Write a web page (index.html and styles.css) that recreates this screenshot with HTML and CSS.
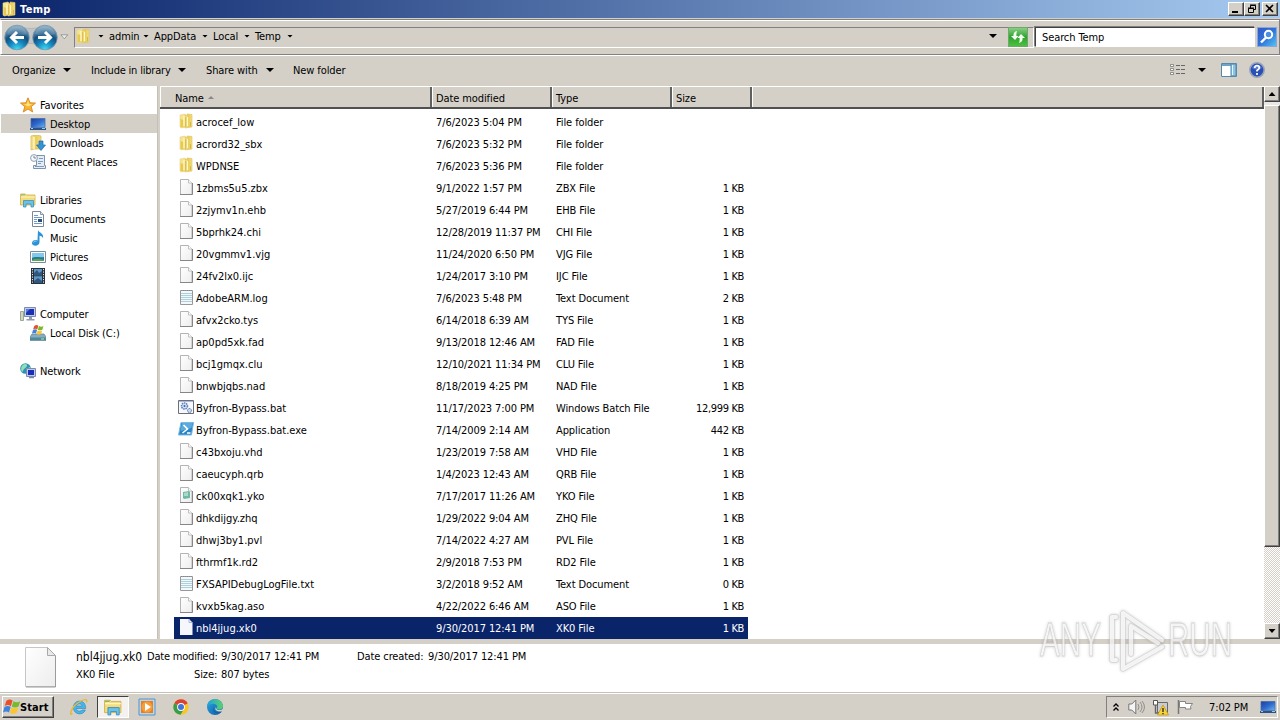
FILE: index.html
```html
<!DOCTYPE html>
<html lang="en">
<head>
<meta charset="utf-8">
<title>Temp</title>
<link rel="stylesheet" href="styles.css">
</head>
<body>
<svg class="defs" aria-hidden="true">
<defs>
<linearGradient id="gFold" x1="0" x2="1"><stop offset="0" stop-color="#f8e795"/><stop offset=".5" stop-color="#e9cd57"/><stop offset="1" stop-color="#f3df86"/></linearGradient>
<linearGradient id="gBlue" x1="0" y1="0" x2="1" y2="1"><stop offset="0" stop-color="#1a3f9a"/><stop offset=".5" stop-color="#2e69cc"/><stop offset="1" stop-color="#6db4ee"/></linearGradient>
<linearGradient id="gPage" x1="0" y1="0" x2="1" y2="1"><stop offset="0" stop-color="#fff"/><stop offset="1" stop-color="#ededed"/></linearGradient>
<radialGradient id="gNav" cx=".5" cy=".98" r=".95"><stop offset="0" stop-color="#3fdcf8"/><stop offset=".35" stop-color="#1586bd"/><stop offset=".62" stop-color="#12507f"/><stop offset="1" stop-color="#8fb2ca"/></radialGradient>
<linearGradient id="gGreen" x1="0" y1="0" x2="0" y2="1"><stop offset="0" stop-color="#8fd08a"/><stop offset=".5" stop-color="#2fa32f"/><stop offset="1" stop-color="#4ec23e"/></linearGradient>
<linearGradient id="gSearch" x1="0" y1="0" x2="1" y2="1"><stop offset="0" stop-color="#3558c4"/><stop offset=".5" stop-color="#2f73da"/><stop offset="1" stop-color="#58c7f5"/></linearGradient>
<linearGradient id="gEdge" x1="0" y1="0" x2="1" y2="1"><stop offset="0" stop-color="#2aa7e0"/><stop offset="1" stop-color="#0c59a4"/></linearGradient>
<linearGradient id="gEdge2" x1="0" x2="1"><stop offset="0" stop-color="#1fa0e0"/><stop offset="1" stop-color="#5bd368"/></linearGradient>
</defs>
<symbol id="folder" viewBox="0 0 16 16"><path d="M2 2l5-1 1 1v12l-5 1-1-1z" fill="#f6e48d" stroke="#e6d28a" stroke-width=".6"/><path d="M7 2.500h2V1l5 .5V14l-7 1z" fill="url(#gFold)" stroke="#dcc05c" stroke-width=".6"/><path d="M2.500 6l3 1v7.500l-3-.5z" fill="#e8c950"/><path d="M6 3v10M9.500 4v9" stroke="#fff8c8" stroke-width="1.200"/><path d="M7.700 4v10M12.500 9v4.500" stroke="#d3b040" stroke-width=".8"/></symbol>
<symbol id="page" viewBox="0 0 16 16"><path d="M2.500.5h8l3.500 3.500v11.500H2.500z" fill="url(#gPage)" stroke="#b4b4b4"/><path d="M14.500 4v11.500H2" fill="none" stroke="#868686"/><path d="M10.500.5V4H14" fill="#fff" stroke="#c0c0c0"/></symbol>
<symbol id="pageSel" viewBox="0 0 16 16"><path d="M2 0h9l3.500 3.500V16H2z" fill="#f5f7fc"/><path d="M11 0v3.500h3" fill="none" stroke="#aab7d8"/></symbol>
<symbol id="text" viewBox="0 0 16 16"><path d="M2.500 1.500h12v14h-12z" fill="#f3f9fb" stroke="#989898"/><path d="M3 4.500h11M3 6.500h11M3 8.500h11M3 10.500h11M3 12.500h11" stroke="#b0cfdc"/><path d="M3 1.500h11" stroke="#888" stroke-dasharray="1 1"/></symbol>
<symbol id="yko" viewBox="0 0 16 16"><use href="#page"/><path d="M5 5l6-1 1 1v6l-6 1-1-1z" fill="#6fb9a6"/><path d="M6 6l4-1v4H6z" fill="#a9dac8"/></symbol>
<symbol id="bat" viewBox="0 0 16 16"><path d="M.5 1.500h15v13H.5z" fill="#f5f8fc" stroke="#6c6f78"/><path d="M1 2.500h14" stroke="#aab9d5"/><circle cx="6.500" cy="7" r="3" fill="#d6e2f5" stroke="#5c7fc0" stroke-width="1.500" stroke-dasharray="1.500 .7"/><circle cx="6.500" cy="7" r="1" fill="#3c5f9c"/><circle cx="11.500" cy="11.500" r="2" fill="#cbd9ef" stroke="#3c5f9c" stroke-dasharray="1 .6"/></symbol>
<symbol id="ps" viewBox="0 0 16 16"><path d="M3 1.500h12.500l-2 12.500H.5z" fill="#2b84c6" stroke="#78b9e3"/><path d="M4 2h10.500l-1 5-11 3z" fill="#5cabdf"/><path d="M5.500 4l4 4-5 4M9 12h3.500" fill="none" stroke="#fff" stroke-width="1.600"/></symbol>
<symbol id="star" viewBox="0 0 16 16"><path d="M8 .8l2 5 5.500.3-4.300 3.500 1.500 5.400L8 12l-4.700 3 1.500-5.400L.5 6.100 6 5.800z" fill="#f9b532" stroke="#dc8320" stroke-width=".9"/><path d="M8 3l1.200 4 3 .3L8 9.500 4 7.200l3-.2z" fill="#ffe77c"/></symbol>
<symbol id="desk" viewBox="0 0 16 16"><path d="M1 2.500h14v9H1z" fill="url(#gBlue)" stroke="#456ba9" stroke-width=".8"/><path d="M0 12h16v2H0z" fill="#2d5086"/><path d="M1 12.500h2M12 12.500h3" stroke="#8fd2e8"/></symbol>
<symbol id="down" viewBox="0 0 16 16"><path d="M1 1l5-1 5 1v13H4l-3 1z" fill="url(#gFold)" stroke="#d5b34c" stroke-width=".7"/><path d="M4 2v12" stroke="#fffbd9" stroke-width="1.300"/><path d="M9 6h4v4h2.500L11 15.500 6.500 10H9z" fill="#3493d3" stroke="#1d6ba9" stroke-width=".7"/></symbol>
<symbol id="recent" viewBox="0 0 16 16"><path d="M6.500 1.500h8v10h1v3h-12v-3h3z" fill="#e4edf6" stroke="#7d93a9"/><path d="M9 4.500h4M8 7.500h5M8 9.500h3M5 12.500h9" stroke="#7c9dbe"/><circle cx="4" cy="4" r="3.400" fill="#f6f9fc" stroke="#8e9fae"/><path d="M4 2v2h2" fill="none" stroke="#5a6d85" stroke-width=".8"/></symbol>
<symbol id="lib" viewBox="0 0 16 16"><path d="M.5 3.500V2h5l1 1h8.500v10H.5z" fill="#f4dc7c" stroke="#ceaf4d" stroke-width=".8"/><path d="M1 5h14M2 3.500h3" stroke="#fff6bd"/><path d="M1 3h4" stroke="#74b66e"/><path d="M3.500 15V8.500h10V15h-2.500v-3H6v3z" fill="#6cc2e4" stroke="#3b90bf" stroke-width=".8"/></symbol>
<symbol id="doc" viewBox="0 0 16 16"><path d="M2.500.5h8l3 3v12h-11z" fill="#fff" stroke="#7d8793"/><path d="M10.500.5v3h3" fill="#dce6f0" stroke="#8a97a6"/><path d="M4 4.500h4M4 6.500h8M4 8.500h3M4 10.500h3M4 12.500h8" stroke="#6c9cc9"/><path d="M8 8h4v3H8z" fill="#294f80"/></symbol>
<symbol id="music" viewBox="0 0 16 16"><path d="M8 0c1 3 6 3 5 8-1-2-2-2-3.500-2.300V12c0 5-8 4.500-7.500 1 .2-2.500 3-3.500 5.500-2.500z" fill="#2c93d5"/><path d="M3.500 12.500c.5-1.300 2-1.700 3-1.300" stroke="#9bd7f5" fill="none"/></symbol>
<symbol id="pic" viewBox="0 0 16 16"><path d="M.5 2.500h15v11H.5z" fill="#fff" stroke="#7d8c9b"/><path d="M2 4h12v8H2z" fill="#83c9ee"/><path d="M2 9c4-2 7 0 12-1v4H2z" fill="#267891"/><path d="M2 11c5-2 7-1 12 0v1H2z" fill="#5aa65d"/></symbol>
<symbol id="vid" viewBox="0 0 16 16"><path d="M1 0h14v16H1z" fill="#28313e"/><path d="M4 1h8v6.300H4zM4 8.300h8V15H4z" fill="#5d99c6"/><path d="M4 5l3-3 2 3 3-2v4.300H4zM4 13l4-3 4 3v2H4z" fill="#30587f"/><path d="M2.500 1v15M13.500 1v15" stroke="#e6e9ec" stroke-dasharray="1.200 1.300"/></symbol>
<symbol id="comp" viewBox="0 0 16 16"><path d="M.5 5.500h3v9h-3z" fill="#cdd6bf" stroke="#899583" stroke-width=".8"/><path d="M4.500 1.500h11v9h-11z" fill="#c5cde6" stroke="#7d8aac"/><path d="M6 3h8v6H6z" fill="#1b31b5"/><path d="M6 3h4l-4 4z" fill="#547be3"/><path d="M9 11h3v2H9zM6.500 13h8v1.500h-8z" fill="#8f9bb0"/></symbol>
<symbol id="flag" viewBox="0 0 16 16"><path d="M3 2.500c2-1.500 4-1.500 5.500-.2L7 7.300C5.500 6 3.500 6 1.500 7z" fill="#e8502b"/><path d="M9.300 2.800c2 1.200 4 1.200 6 0l-1.500 4.700c-2 1.200-4 1.200-6 0z" fill="#79b92f"/><path d="M1.300 8c2-1.200 4-1.200 5.500 0l-1.500 4.800c-1.500-1.200-3.500-1.200-5.300 0z" fill="#3f83dd"/><path d="M7.600 8.500c2 1.200 4 1.200 6 0l-1.500 4.700c-2 1.200-4 1.200-6 0z" fill="#fbc52c"/></symbol>
<symbol id="disk" viewBox="0 0 16 16"><path d="M2 9h12l2 3v3.500H0V12z" fill="#8cacbe" stroke="#5d7f90" stroke-width=".7"/><path d="M0 12.500h16V15H0z" fill="#4c8b9d"/><path d="M11 14h3" stroke="#a4ecad"/><use href="#flag" x="2" y="-1" width="12" height="12"/></symbol>
<symbol id="net" viewBox="0 0 16 16"><circle cx="5.500" cy="5.500" r="5.300" fill="#2f8fb4"/><path d="M2 3c2-3 6-2 5 0S4 5 3 8 0 5 2 3zM6 6l4-2v4l-3 2z" fill="#8cdfb8"/><path d="M6.500 5.500h9v8h-9z" fill="#bccae8" stroke="#7d8bb0"/><path d="M8 7h6v5H8z" fill="#1830b7"/><path d="M9 14.500h5" stroke="#7c8aa9" stroke-width="1.500"/></symbol>
<symbol id="ie" viewBox="0 0 18 18"><path d="M15.700 10.500H6.300c.5 3 4.500 3.500 5.700 1.500h3.400c-2.200 6-12 5-12-2.500 0-8.500 12.600-9 12.300 1zM6.400 8h5.900c-.5-2.800-5.300-2.800-5.900 0z" fill="#48b5e7" stroke="#2685c5" stroke-width=".6"/><path d="M2.500 15.500C-1 19 .5 10 7 5.500S18 0 16.500 4.500" fill="none" stroke="#e5b83c" stroke-width="1.400"/></symbol>
<symbol id="wmp" viewBox="0 0 18 18"><path d="M1 1h16v16H1z" fill="#b2d7f2" stroke="#5395c8"/><path d="M3 3h12v12H3z" fill="#ef7d17"/><circle cx="9" cy="9" r="5.500" fill="#f99b36"/><path d="M7 5l6 4-6 4z" fill="#fff"/></symbol>
<symbol id="chrome" viewBox="0 0 18 18"><circle cx="9" cy="9" r="7.700" fill="#f8c727"/><path d="M9 9L2.300 5.200A7.700 7.700 0 0 1 15.700 5.200z" fill="#dc4135"/><path d="M9 9L2.300 5.200A7.700 7.700 0 0 0 8.500 16.700L12 11z" fill="#3b9d4a"/><circle cx="9" cy="9" r="3.900" fill="#fff"/><circle cx="9" cy="9" r="3" fill="#4474d7"/></symbol>
<symbol id="edge" viewBox="0 0 18 18"><circle cx="9" cy="9" r="8" fill="url(#gEdge)"/><path d="M1.200 8C2-1 16-1 17 8c0 4-5 4.500-6.500 2.500C13 7 8 3 1.200 8z" fill="url(#gEdge2)"/><path d="M8 8c-2 4 2 8 8 5l-1 1.500C9 18 5 12 8 8z" fill="#1463a8"/><path d="M10.300 10.500c1 2 5 2 6.500 0l.7 2-2 1C11 14 8 12 10 9z" fill="#d4d0c8"/></symbol>
</svg>

<div class="window">
  <header class="titlebar">
    <svg class="i16"><use href="#folder"/></svg><b class="title">Temp</b>
    <div class="winbtns">
      <span class="wb"><svg width="14" height="12"><path d="M3 9h6" stroke="#000" stroke-width="2"/></svg></span>
      <span class="wb"><svg width="14" height="12"><path d="M5.500 5V2.500h5v4H9M5 2h6M3.500 5.500h5v4h-5zM3 5h6" fill="none" stroke="#000"/></svg></span>
      <span class="wb last"><svg width="14" height="12"><path d="M3 2l7 7M10 2L3 9" stroke="#000" stroke-width="1.600"/></svg></span>
    </div>
  </header>

  <div class="addressbar">
    <svg class="nav" viewBox="0 0 62 27"><path d="M13 2q14 5 28 0v20q-14-5-28 0z" fill="#c2c5c6" stroke="#a5a9ab" stroke-width=".6"/><circle cx="13" cy="13.500" r="12.300" fill="url(#gNav)" stroke="#7b97ab" stroke-width=".8"/><circle cx="41" cy="13.500" r="12.300" fill="url(#gNav)" stroke="#7b97ab" stroke-width=".8"/><path d="M3 10a10.500 10.500 0 0 1 20 0Q13 14 3 10zM31 10a10.500 10.500 0 0 1 20 0Q41 14 31 10z" fill="#fff" opacity=".15"/><path d="M20 13.500H8M13 8l-5.500 5.500L13 19M34 13.500h12M41 8l5.500 5.500L41 19" fill="none" stroke="#fff" stroke-width="3"/></svg>
    <svg class="recentarrow" viewBox="0 0 9 6"><path d="M.8.8h7L4.300 4.800z" fill="#eee" stroke="#888" stroke-width=".8"/></svg>
    <div class="path">
      <svg class="i16"><use href="#folder"/></svg>
      <i class="arr a0"></i><span class="c1">admin</span><i class="arr"></i><span class="c2">AppData</span><i class="arr"></i><span class="c3">Local</span><i class="arr"></i><span class="c4">Temp</span><i class="arr"></i>
      <i class="arr big drop"></i>
    </div>
    <svg class="refresh" viewBox="0 0 20 20"><rect x=".5" y=".5" width="19" height="19" fill="url(#gGreen)" stroke="#6fa86b"/><path d="M9 4Q5 5 5.500 9H3l4 4 3.500-4H8.500Q8 7 9 4zM11 16q4-1 3.500-5H17l-4-4-3.500 4h2q.5 2-.5 5z" fill="#f4fff2"/></svg>
    <div class="search"><span>Search Temp</span></div>
    <svg class="searchbtn" viewBox="0 0 20 20"><rect x=".5" y=".5" width="19" height="19" fill="url(#gSearch)" stroke="#8ba6d8"/><circle cx="11.500" cy="7.500" r="3.700" fill="#4c8de5" stroke="#fff" stroke-width="2"/><path d="M9 10.500l-5 5" stroke="#fff" stroke-width="2.400"/></svg>
  </div>

  <div class="commands">
    <span class="m1">Organize</span><i class="arr big"></i>
    <span class="m2">Include in library</span><i class="arr big"></i>
    <span class="m3">Share with</span><i class="arr big"></i>
    <span class="m4">New folder</span>
    <div class="tools">
      <svg width="16" height="12" viewBox="0 0 16 12"><path d="M.5.5h3v2h-3zM.5 4.500h3v2h-3zM.5 8.500h3v2h-3z" fill="#fff" stroke="#777" stroke-width=".8"/><path d="M6 1.500h9M6 5.500h9M6 9.500h9" stroke="#666" stroke-dasharray="4 1"/></svg>
      <i class="arr big t1"></i>
      <svg class="t2" width="16" height="14" viewBox="0 0 16 14"><path d="M.5.500h15v13H.5z" fill="#fff" stroke="#5588ad"/><path d="M1 2h9" stroke="#6da4c7" stroke-width="2"/><path d="M10 1h5v12h-5z" fill="#8bc5e5" stroke="#5588ad"/><path d="M11.500 2v10" stroke="#e2f5ff"/></svg>
      <svg class="t3" width="16" height="16" viewBox="0 0 16 16"><circle cx="8" cy="8" r="7.200" fill="#2b50b5" stroke="#9aa5ba" stroke-width="1.600"/><path d="M3 6a5.500 5 0 0 1 10 0q-5 3-10 0z" fill="#7296dc" opacity=".7"/><path d="M5.700 6q0-2.300 2.300-2.300T10.300 6Q10.300 7 8 8.500v1M8 11v2" fill="none" stroke="#fff" stroke-width="1.700"/></svg>
    </div>
  </div>

  <main class="content">
    <nav class="tree">
      <div class="node"><svg class="i16"><use href="#star"/></svg><span>Favorites</span></div>
      <div class="node sub on"><svg class="i16"><use href="#desk"/></svg><span>Desktop</span></div>
      <div class="node sub"><svg class="i16"><use href="#down"/></svg><span>Downloads</span></div>
      <div class="node sub"><svg class="i16"><use href="#recent"/></svg><span>Recent Places</span></div>
      <div class="node gap"><svg class="i16"><use href="#lib"/></svg><span>Libraries</span></div>
      <div class="node sub"><svg class="i16"><use href="#doc"/></svg><span>Documents</span></div>
      <div class="node sub"><svg class="i16"><use href="#music"/></svg><span>Music</span></div>
      <div class="node sub"><svg class="i16"><use href="#pic"/></svg><span>Pictures</span></div>
      <div class="node sub"><svg class="i16"><use href="#vid"/></svg><span>Videos</span></div>
      <div class="node gap"><svg class="i16"><use href="#comp"/></svg><span>Computer</span></div>
      <div class="node sub"><svg class="i16"><use href="#disk"/></svg><span>Local Disk (C:)</span></div>
      <div class="node gap"><svg class="i16"><use href="#net"/></svg><span>Network</span></div>
    </nav>
    <section class="files">
      <div class="head"><span class="h1">Name<i class="sort"></i></span><span class="h2">Date modified</span><span class="h3">Type</span><span class="h4">Size</span><span class="h5"></span></div>
      <div class="rows">
        <div class="row"><svg class="i16"><use href="#folder"/></svg><span>acrocef_low</span><span>7/6/2023 5:04 PM</span><span>File folder</span><span></span></div>
        <div class="row"><svg class="i16"><use href="#folder"/></svg><span>acrord32_sbx</span><span>7/6/2023 5:32 PM</span><span>File folder</span><span></span></div>
        <div class="row"><svg class="i16"><use href="#folder"/></svg><span>WPDNSE</span><span>7/6/2023 5:36 PM</span><span>File folder</span><span></span></div>
        <div class="row"><svg class="i16"><use href="#page"/></svg><span>1zbms5u5.zbx</span><span>9/1/2022 1:57 PM</span><span>ZBX File</span><span>1 KB</span></div>
        <div class="row"><svg class="i16"><use href="#page"/></svg><span>2zjymv1n.ehb</span><span>5/27/2019 6:44 PM</span><span>EHB File</span><span>1 KB</span></div>
        <div class="row"><svg class="i16"><use href="#page"/></svg><span>5bprhk24.chi</span><span>12/28/2019 11:37 PM</span><span>CHI File</span><span>1 KB</span></div>
        <div class="row"><svg class="i16"><use href="#page"/></svg><span>20vgmmv1.vjg</span><span>11/24/2020 6:50 PM</span><span>VJG File</span><span>1 KB</span></div>
        <div class="row"><svg class="i16"><use href="#page"/></svg><span>24fv2lx0.ijc</span><span>1/24/2017 3:10 PM</span><span>IJC File</span><span>1 KB</span></div>
        <div class="row"><svg class="i16"><use href="#text"/></svg><span>AdobeARM.log</span><span>7/6/2023 5:48 PM</span><span>Text Document</span><span>2 KB</span></div>
        <div class="row"><svg class="i16"><use href="#page"/></svg><span>afvx2cko.tys</span><span>6/14/2018 6:39 AM</span><span>TYS File</span><span>1 KB</span></div>
        <div class="row"><svg class="i16"><use href="#page"/></svg><span>ap0pd5xk.fad</span><span>9/13/2018 12:46 AM</span><span>FAD File</span><span>1 KB</span></div>
        <div class="row"><svg class="i16"><use href="#page"/></svg><span>bcj1gmqx.clu</span><span>12/10/2021 11:34 PM</span><span>CLU File</span><span>1 KB</span></div>
        <div class="row"><svg class="i16"><use href="#page"/></svg><span>bnwbjqbs.nad</span><span>8/18/2019 4:25 PM</span><span>NAD File</span><span>1 KB</span></div>
        <div class="row"><svg class="i16"><use href="#bat"/></svg><span>Byfron-Bypass.bat</span><span>11/17/2023 7:00 PM</span><span>Windows Batch File</span><span>12,999 KB</span></div>
        <div class="row"><svg class="i16"><use href="#ps"/></svg><span>Byfron-Bypass.bat.exe</span><span>7/14/2009 2:14 AM</span><span>Application</span><span>442 KB</span></div>
        <div class="row"><svg class="i16"><use href="#page"/></svg><span>c43bxoju.vhd</span><span>1/23/2019 7:58 AM</span><span>VHD File</span><span>1 KB</span></div>
        <div class="row"><svg class="i16"><use href="#page"/></svg><span>caeucyph.qrb</span><span>1/4/2023 12:43 AM</span><span>QRB File</span><span>1 KB</span></div>
        <div class="row"><svg class="i16"><use href="#yko"/></svg><span>ck00xqk1.yko</span><span>7/17/2017 11:26 AM</span><span>YKO File</span><span>1 KB</span></div>
        <div class="row"><svg class="i16"><use href="#page"/></svg><span>dhkdijgy.zhq</span><span>1/29/2022 9:04 AM</span><span>ZHQ File</span><span>1 KB</span></div>
        <div class="row"><svg class="i16"><use href="#page"/></svg><span>dhwj3by1.pvl</span><span>7/14/2022 4:27 AM</span><span>PVL File</span><span>1 KB</span></div>
        <div class="row"><svg class="i16"><use href="#page"/></svg><span>fthrmf1k.rd2</span><span>2/9/2018 7:53 PM</span><span>RD2 File</span><span>1 KB</span></div>
        <div class="row"><svg class="i16"><use href="#text"/></svg><span>FXSAPIDebugLogFile.txt</span><span>3/2/2018 9:52 AM</span><span>Text Document</span><span>0 KB</span></div>
        <div class="row"><svg class="i16"><use href="#page"/></svg><span>kvxb5kag.aso</span><span>4/22/2022 6:46 AM</span><span>ASO File</span><span>1 KB</span></div>
        <div class="row selected"><svg class="i16"><use href="#pageSel"/></svg><span>nbl4jjug.xk0</span><span>9/30/2017 12:41 PM</span><span>XK0 File</span><span>1 KB</span></div>
      </div>
    </section>
    <div class="scroll"><span class="sb"><i class="up"></i></span><span class="thumb"></span><span class="track"></span><span class="sb"><i class="arr"></i></span></div>
  </main>

  <section class="details">
    <svg class="bigpage" viewBox="0 0 32 42"><path d="M.5 1.500h22l8 8v31H.5z" fill="url(#gPage)" stroke="#c6c6c6"/><path d="M30.500 10v31H1" fill="none" stroke="#9b9b9b"/><path d="M22.500 1.500v8h8z" fill="#e9e9e9" stroke="#a9a9a9"/></svg>
    <div class="info">
      <div class="line"><span class="fname">nbl4jjug.xk0</span><span class="dl">Date modified:</span><span class="dv">9/30/2017 12:41 PM</span><span class="cl">Date created:</span><span>9/30/2017 12:41 PM</span></div>
      <div class="line"><span class="ftype">XK0 File</span><span class="sl">Size:</span><span>807 bytes</span></div>
    </div>
  </section>

  <footer class="taskbar">
    <div class="start"><svg width="18" height="18"><use href="#flag"/></svg><b>Start</b></div>
    <span class="tb"><svg class="i18"><use href="#ie"/></svg></span>
    <span class="tb active"><svg class="i18"><use href="#lib"/></svg></span>
    <span class="tb"><svg class="i18"><use href="#wmp"/></svg></span>
    <span class="tb"><svg class="i18"><use href="#chrome"/></svg></span>
    <span class="tb"><svg class="i18"><use href="#edge"/></svg></span>
    <div class="tray">
      <svg width="6" height="9" viewBox="0 0 6 9"><path d="M.5 3.500L3 1l2.500 2.500M.5 7.500L3 5l2.500 2.500" fill="none" stroke="#000" stroke-width="1.300"/></svg>
      <svg class="vol" width="17" height="16" viewBox="0 0 17 16"><path d="M.8 5h3l4-4v14l-4-4h-3z" fill="#f4f4f4" stroke="#777"/><path d="M10 5q2 3 0 6M12 3q4 5 0 10M14 2q5 6 0 12" fill="none" stroke="#888" stroke-width=".9"/></svg>
      <svg class="nw" width="17" height="17" viewBox="0 0 17 17"><path d="M5.500 3.500h10v10h-10z" fill="#c9ccd0" stroke="#686868"/><path d="M1.500 1.500h4V6h-4z" fill="#fff" stroke="#555"/><path d="M3.500 6v8h4" fill="none" stroke="#666" stroke-width="1.400"/><path d="M11 6l5.500 10h-11z" fill="#fbd330" stroke="#bb901c" stroke-width=".7"/><path d="M11 9v4M11 14v1.300" stroke="#222" stroke-width="1.300"/></svg>
      <svg class="fl" width="17" height="16" viewBox="0 0 17 16"><path d="M1.500 1v14" stroke="#777" stroke-width="1.500"/><path d="M2.500 2.500h6v2h7l-2 3 .5 2.500H8.500V8.500h-6z" fill="#fff" stroke="#858585"/></svg>
      <span class="clock">7:02 PM</span>
      <svg class="i16 sd"><use href="#desk"/></svg>
    </div>
  </footer>

  <svg class="watermark" viewBox="0 0 220 80"><g fill="#fff" stroke="#ccc" stroke-width=".8" opacity=".72"><text x="6" y="54" textLength="61" lengthAdjust="spacingAndGlyphs">ANY</text><text x="134" y="54" textLength="64" lengthAdjust="spacingAndGlyphs">RUN</text></g><g fill="none" stroke-linejoin="round" stroke-linecap="round" opacity=".72"><path d="M82 15h-4v43h4M128 38L89 11v56l39-22M97 52V24l27 17" stroke="#ccc" stroke-width="5.400"/><path d="M82 15h-4v43h4M128 38L89 11v56l39-22M97 52V24l27 17" stroke="#fff" stroke-width="4"/></g></svg>
</div>
</body>
</html>
```
FILE: styles.css
```css
* { box-sizing: border-box; }
body { margin: 0; overflow: hidden; }
.defs { position: absolute; width: 0; height: 0; }
.window {
  position: relative; width: 1280px; height: 720px; overflow: hidden;
  display: flex; flex-direction: column; background: #d4d0c8; color: #000;
  font: 11px/14px "DejaVu Sans Condensed", "DejaVu Sans", sans-serif;
  font-stretch: condensed; letter-spacing: -0.1px; white-space: nowrap;
}
.i16 { width: 16px; height: 16px; flex: none; }
.i18 { width: 18px; height: 18px; flex: none; }
.title, .node span, .row span, .line span, .start b, .clock { padding-top: 2px; }

.titlebar { height: 18px; flex: none; display: flex; align-items: center; padding: 0 2px 0 1px; background: linear-gradient(90deg, #0a246a, #a6caf0); }
.title { color: #fff; font-size: 11px; margin-left: 3px; letter-spacing: .35px; }
.winbtns { margin-left: auto; display: flex; }
.wb { width: 16px; height: 14px; background: #d4d0c8; border: 1px solid; border-color: #fff #404040 #404040 #fff; box-shadow: inset -1px -1px #808080; }
.wb svg { display: block; }
.wb.last { margin-left: 2px; }

.addressbar { height: 36px; flex: none; display: flex; align-items: center; padding: 0 2px 0 3px; margin-top: 1px; border: 1px solid #808080; border-left-color: #fff; box-shadow: inset 1px 1px #fff; }
.nav { width: 62px; height: 27px; flex: none; margin-right: -6px; }
.recentarrow { width: 9px; height: 6px; flex: none; }
.path { width: 960px; margin-left: 5px; height: 21px; flex: none; display: flex; align-items: center; border: 1px solid; border-color: #808080 #fff #fff #808080; padding-bottom: 2px; }
.path span { padding-top: 2px; }
.arr { width: 5px; height: 3px; background: #000; clip-path: polygon(0 0, 100% 0, 50% 100%); flex: none; }
.path .arr { width: 6px; }
.arr.big, .path .arr.big { width: 8px; height: 4px; }
.path .a0 { margin-left: 7px; }
.path .c1 { margin-left: 5px; width: 34px; }
.path .c2 { margin-left: 5px; width: 48px; }
.path .c3 { margin-left: 5px; width: 30px; }
.path .c4 { margin-left: 5px; width: 32px; }
.path .c3 + .arr { margin-left: 1px; }
.path .drop { margin-left: auto; margin-right: 36px; }
.refresh { width: 20px; height: 20px; flex: none; margin-left: -26px; }
.search { margin-left: 7px; width: 220px; height: 20px; background: #fff; border: 1px solid #404040; border-right-color: #fff; border-bottom-color: #fff; box-shadow: -1px -1px #808080; padding: 3px 0 0 6px; }
.searchbtn { width: 20px; height: 20px; margin-left: 2px; flex: none; }

.commands { height: 31px; flex: none; display: flex; align-items: center; padding: 0 0 2px 12px; border-top: 1px solid #fff; }
.commands > span { padding-top: 2px; }
.m1 { width: 51px; } .m2 { width: 87px; letter-spacing: -.2px; } .m3 { width: 60px; }
.m2, .m3 { margin-left: 20px; }
.m4 { margin-left: 19px; }
.tools { display: flex; align-items: center; margin-left: auto; margin-right: 15px; }
.t1 { margin-left: 12px; } .t2 { margin-left: 15px; } .t3 { margin-left: 12px; }

.content { height: 553px; flex: none; display: flex; }
.tree { width: 158px; background: #fff; padding: 9px 0 0 1px; border-right: 1px solid #c5c1b9; }
.node { height: 19px; display: flex; align-items: center; padding-left: 19px; }
.node span { margin-left: 4px; }
.node.sub { padding-left: 29px; }
.node.on { background: #d4d0c8; }
.node.gap { margin-top: 19px; }
.files { width: 1104px; margin-left: 2px; background: #fff; }
.head { height: 23px; display: flex; background: #d4d0c8; border-bottom: 2px solid #505050; border-top: 1px solid #fff; }
.head span { border-left: 1px solid #fff; border-right: 2px solid #606060; padding: 5px 0 0 3px; display: flex; }
.head .h1 { width: 272px; padding-left: 14px; }
.h2, .h3 { width: 120px; } .h4 { width: 80px; } .h5 { flex: 1; }
.sort { border: 3px solid transparent; border-bottom-color: #888; border-top: 0; height: 3px; margin: 4px 0 0 4px; }
.rows { padding: 2px 0 0 14px; }
.row { height: 22px; width: 574px; display: grid; grid-template-columns: 22px 240px 120px 100px 1fr; align-items: center; padding-right: 4px; }
.row .i16 { margin-left: 4px; margin-top: -2px; }
.row span:nth-child(2) { letter-spacing: 0; }
.row span:last-child { text-align: right; letter-spacing: -.35px; }
.selected { background: #0a246a; color: #fff; }
.scroll { width: 16px; display: flex; flex-direction: column; background: #eae8e4; }
.sb, .thumb { width: 16px; height: 16px; flex: none; background: #d4d0c8; border: 1px solid; border-color: #fff #404040 #404040 #fff; box-shadow: inset -1px -1px #808080; display: flex; align-items: center; justify-content: center; }
.sb .arr { width: 7px; height: 4px; }
.up { width: 7px; height: 4px; background: #000; clip-path: polygon(50% 0, 100% 100%, 0 100%); }
.thumb { height: 442px; margin-top: 3px; }
.track { flex: 1; background: repeating-conic-gradient(#fff 0 25%, #d4d0c8 0 50%) 0 0 / 2px 2px; }

.details { height: 49px; margin-top: 5px; flex: none; display: flex; background: #fff; border-bottom: 1px solid #c5c1b9; }
.bigpage { width: 32px; height: 42px; margin: 2px 0 0 25px; }
.info { margin: 3px 0 0 19px; display: flex; flex-direction: column; }
.line { height: 18px; display: flex; align-items: center; }
.line .fname { font-size: 12px; width: 71px; letter-spacing: 0; padding-top: 1px; }
.dl { width: 74px; letter-spacing: -.2px; } .dv { width: 136px; } .cl { width: 71px; }
.ftype { width: 118px; } .sl { width: 27px; }

.taskbar { height: 27px; flex: none; display: flex; align-items: center; padding-left: 2px; border-top: 1px solid #fff; }
.start { width: 52px; height: 22px; display: flex; align-items: center; border: 1px solid; border-color: #fff #404040 #404040 #fff; box-shadow: inset -1px -1px #808080; margin-right: 8px; }
.start b { font-size: 11px; letter-spacing: .1px; margin-left: -1px; }
.tb { width: 34px; height: 22px; display: flex; align-items: center; justify-content: center; }
.tb.active { width: 32px; margin: 0 1px; background: #f4f2ef; border: 1px solid; border-color: #404040 #fff #fff #404040; }
.tray { margin-left: auto; margin-right: 2px; width: 172px; height: 22px; display: flex; align-items: center; border: 1px solid; border-color: #808080 #fff #fff #808080; padding-left: 6px; }
.vol { margin-left: 9px; } .nw { margin-left: 7px; } .fl { margin-left: 8px; }
.clock { margin-left: 15px; width: 40px; }
.sd { margin-left: 11px; }

.watermark { position: absolute; left: 1034px; top: 602px; width: 220px; height: 80px; overflow: visible; font: 48px "Liberation Sans", sans-serif; letter-spacing: 0; filter: drop-shadow(0 0 1.5px rgba(0,0,0,.25)); }
```
